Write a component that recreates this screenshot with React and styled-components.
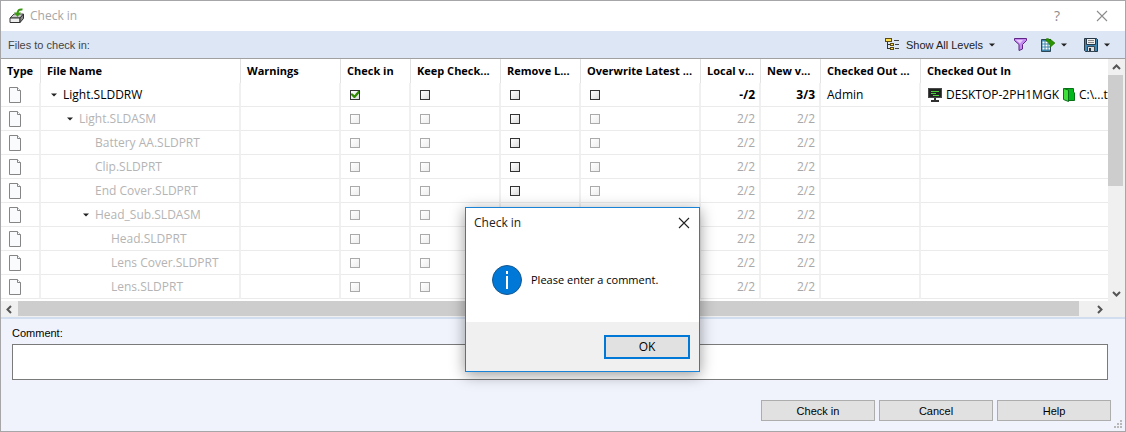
import React from "react";
import styled, { createGlobalStyle } from "styled-components";

const uiSmall = `11px/16px "Liberation Sans", Arial, sans-serif`;

const GlobalStyle = createGlobalStyle`
  *, *::before, *::after { box-sizing: border-box; }
  html, body, #root { height: 100%; }
  body { margin: 0; background: #fff; color: #000; font: 12px/16px "Open Sans", "Noto Sans", sans-serif; }
  button, textarea, input { font: inherit; color: inherit; margin: 0; padding: 0; }
  svg { display: block; flex: none; }
`;

const Window = styled.main`
  position: relative;
  display: flex;
  flex-direction: column;
  min-height: 100%;
  border: 1px solid #a6a6a8;
  background: #f0f3fc;
  overflow: hidden;
`;

const TitleBar = styled.header`
  display: flex;
  align-items: center;
  height: 30px;
  padding: 0 14px 0 8px;
  gap: 6px;
  background: #fff;
  color: #a6a6a6;
`;

const Title = styled.h1`
  flex: 1;
  margin: 0;
  font-size: 12px;
  font-weight: 400;
`;

const PlainButton = styled.button`
  display: flex;
  align-items: center;
  justify-content: center;
  border: 0;
  background: none;
`;

const CaptionButton = styled(PlainButton)`
  width: 40px;
  height: 28px;
  font-size: 14px;
  color: #8c8c8c;
  &:last-child { width: 18px; margin-left: 10px; }
`;

const Toolbar = styled.div`
  display: flex;
  align-items: center;
  height: 28px;
  padding: 0 15px 0 7px;
  border-bottom: 1px solid #a0a0a0;
  background: #dce6f4;
  font: ${uiSmall};
  font-size: 12px;
  color: #444;
`;

const ToolbarLabel = styled.span`
  flex: 1;
  font-size: 11px;
`;

const ToolButton = styled(PlainButton)`
  gap: 6px;
  height: 22px;
  margin-left: ${(p) => p.$gap}px;
  font-size: 11px;
  color: #222;
`;

const ListArea = styled.section`
  display: grid;
  grid-template-columns: minmax(0, 1fr) 17px;
  grid-template-rows: auto 16px;
  background: #fff;
`;

const TableClip = styled.div`
  overflow: hidden;
  padding-bottom: 2px;
`;

const FileTable = styled.table`
  width: 100%;
  table-layout: fixed;
  border-collapse: separate;
  border-spacing: 0;
`;

const Col = styled.col`
  width: ${(p) => (p.$w ? `${p.$w}px` : "auto")};
`;

const HeadCell = styled.th`
  height: 24px;
  padding: 0 0 0 6px;
  border-right: 1px solid #e2e2e2;
  font-weight: 700;
  font-size: 11px;
  text-align: left;
  white-space: nowrap;
  overflow: hidden;
  &:last-child { border-right: 0; }
`;

const Cell = styled.td`
  height: 24px;
  padding: 1px ${(p) => (p.$right ? 4 : 0)}px 0 ${(p) => p.$pad ?? 6}px;
  border-right: 2px solid #f0f0f0;
  border-bottom: 1px solid #ebebeb;
  color: ${(p) => (p.$dim ? "#a8a8a8" : "#000")};
  font-weight: ${(p) => (p.$bold ? 700 : 400)};
  text-align: ${(p) => (p.$right ? "right" : "left")};
  white-space: nowrap;
  overflow: hidden;
  &:last-child { border-right: 0; }
`;

const NameLine = styled.div`
  display: flex;
  align-items: center;
  padding-left: ${(p) => 10 + p.$level * 16}px;
  color: ${(p) => (p.$dim ? "#b4b4b4" : "#000")};
`;

const Expander = styled(PlainButton)`
  width: 12px;
  height: 16px;
  justify-content: flex-start;
  color: #222;
`;

const ExpanderSpace = styled.span`
  width: 12px;
`;

const Location = styled.div`
  display: flex;
  align-items: center;
  gap: 4px;
`;

const Check = styled.input.attrs({ type: "checkbox" })`
  appearance: none;
  display: block;
  width: 10px;
  height: 10px;
  border: 1px solid #333;
  background: linear-gradient(135deg, #fff, #dcdcdc);
  &:disabled { border-color: #aaa; background: linear-gradient(135deg, #fff, #eee); }
  &:checked::after {
    content: "";
    display: block;
    width: 8px;
    height: 8px;
    background: #2f8a00;
    clip-path: polygon(0 30%, 20% 30%, 42% 52%, 88% 0, 100% 0, 100% 30%, 50% 88%, 36% 88%, 0 50%);
  }
`;

const VScroll = styled.div`
  display: flex;
  flex-direction: column;
  background: #f0f0f0;
  padding-right: 2px;
`;

const HScroll = styled.div`
  grid-column: 1 / -1;
  display: flex;
  background: #f0f0f0;
  padding: 0 17px 1px 0;
`;

const ScrollButton = styled(PlainButton)`
  flex: none;
  width: 17px;
  height: 16px;
  color: #555;
`;

const VTrack = styled.div`
  flex: 1;
`;

const VThumb = styled.div`
  height: 53%;
  background: #cdcdcd;
`;

const HTrack = styled.div`
  flex: 1;
  padding-right: 12px;
`;

const HThumb = styled.div`
  height: 100%;
  background: #cdcdcd;
`;

const CommentPanel = styled.section`
  flex: 1;
  display: flex;
  flex-direction: column;
  padding: 6px 17px 0 11px;
  border-top: 2px solid #d2def0;
`;

const CommentLabel = styled.label`
  height: 19px;
  font: ${uiSmall};
`;

const CommentBox = styled.textarea`
  display: block;
  width: 100%;
  height: 36px;
  padding: 4px;
  border: 1px solid #7a7a7a;
  background: #fff;
  resize: none;
  outline: 0;
`;

const Footer = styled.footer`
  display: flex;
  justify-content: flex-end;
  gap: 4px;
  padding: 20px 14px 10px;
`;

const PushButton = styled.button`
  width: 114px;
  height: 21px;
  border: 1px solid #adadad;
  background: #e1e1e1;
  && { font: ${uiSmall}; }
`;

const Grip = styled.svg`
  position: absolute;
  right: 2px;
  bottom: 2px;
`;

const Dialog = styled.div`
  position: absolute;
  top: 206px;
  left: 464px;
  display: flex;
  flex-direction: column;
  width: 235px;
  border: 1px solid #1883d7;
  background: #fff;
  box-shadow: 0 3px 14px rgba(0, 0, 0, 0.4);
`;

const DialogTitle = styled.div`
  display: flex;
  align-items: center;
  justify-content: space-between;
  height: 30px;
  padding: 0 9px 0 8px;
  color: #222;
`;

const DialogBody = styled.div`
  display: flex;
  align-items: center;
  gap: 9px;
  height: 84px;
  padding: 0 26px;
  font-size: 11px;
  white-space: nowrap;
`;

const DialogFooter = styled.div`
  display: flex;
  justify-content: flex-end;
  padding: 13px 9px 12px;
  background: #f0f0f0;
`;

const OkButton = styled.button`
  width: 86px;
  height: 24px;
  border: 2px solid #0078d7;
  background: #e1e1e1;
`;

const DownArrow = () => (
  <svg width="6" height="4" viewBox="0 0 6 4" aria-hidden="true">
    <path d="M0 0.500H6L3 3.500Z" fill="currentColor" />
  </svg>
);

const chevrons = {
  up: "M1 6L4.500 2.500L8 6",
  down: "M1 3L4.500 6.500L8 3",
  left: "M6 1L2.500 4.500L6 8",
  right: "M3 1L6.500 4.500L3 8",
};

const Chevron = ({ to }) => (
  <svg width="9" height="9" viewBox="0 0 9 9" aria-hidden="true">
    <path d={chevrons[to]} fill="none" stroke="currentColor" strokeWidth="2" />
  </svg>
);

const CloseIcon = () => (
  <svg width="12" height="12" viewBox="0 0 12 12" aria-hidden="true">
    <path d="M1 1L11 11M11 1L1 11" stroke="currentColor" strokeWidth="1.1" />
  </svg>
);

const CheckInIcon = () => (
  <svg width="15" height="16" viewBox="0 0 15 16" aria-hidden="true">
    <path d="M1 10L5 6H14.500L11 10Z" fill="#c8c8c8" stroke="#444" />
    <path d="M1 10H11V14.500H1Z" fill="#eee" stroke="#333" />
    <path d="M11 10L14.500 6V10.500L11 14.500Z" fill="#888" stroke="#333" />
    <path d="M13.500 1.500C10 1 8.500 2.500 8.500 6" fill="none" stroke="#3a9a10" strokeWidth="2" />
    <path d="M5 4.500H12L8.500 9Z" fill="#3a9a10" />
  </svg>
);

const LevelsIcon = () => (
  <svg width="15" height="13" viewBox="0 0 15 13" shapeRendering="crispEdges" aria-hidden="true">
    <path d="M0.500 0.500H6.500V3.500H0.500Z" fill="#ffe14d" stroke="#5e4a10" />
    <path d="M2.500 4V10.500H5M2.500 6.500H5" fill="none" stroke="#333" />
    <path d="M5.500 5.500H8.500V7.500H5.500ZM5.500 9.500H8.500V11.500H5.500Z" fill="#ffe14d" stroke="#5e4a10" />
    <path d="M9 2.500H14M10 6.500H14M10 10.500H14" stroke="#444" />
  </svg>
);

const FunnelIcon = () => (
  <svg width="13" height="13" viewBox="0 0 13 13" aria-hidden="true">
    <path d="M0.500 0.500H12.500V2.500L8.500 6.500V11L5 12.500V6.500L0.500 2.500Z" fill="#c58af0" stroke="#5f2485" />
    <path d="M2 2H9L6 5.500Z" fill="#e8ccff" />
  </svg>
);

const ExportIcon = () => (
  <svg width="15" height="14" viewBox="0 0 15 14" aria-hidden="true">
    <path d="M1.500 1.500H10.500V13.500H1.500Z" fill="#3f86ad" stroke="#2d4757" />
    <path d="M2.500 4.500H10M2.500 7.500H10M2.500 10.500H10" stroke="#fff" strokeWidth="2" strokeDasharray="2 1" />
    <path d="M6 1C8 0 9.500 1 10 2.500V1L15 5L10 9.500V7C8.500 6 9 3.500 6 3Z" fill="#2b9400" stroke="#1c6200" strokeWidth="0.5" />
  </svg>
);

const SaveIcon = () => (
  <svg width="14" height="14" viewBox="0 0 14 14" aria-hidden="true">
    <path d="M0.500 0.500H12.500L13.500 1.500V13.500H1.500L0.500 12.500Z" fill="#3f86b5" stroke="#263746" />
    <path d="M2.500 0.500H11.500V6.500H2.500Z" fill="#eee" stroke="#263746" />
    <path d="M4 2.500H10M4 4.500H10" stroke="#888" />
    <path d="M3.500 8.500H10.500V13.500H3.500Z" fill="#ddd" stroke="#344653" />
    <path d="M5 10H7V13H5Z" fill="#263746" />
  </svg>
);

const FileIcon = () => (
  <svg width="12" height="16" viewBox="0 0 12 16" aria-hidden="true">
    <path d="M0.500 0.500H8.500L11.500 3.500V15.500H0.500Z" fill="#fafbfc" stroke="#858585" />
    <path d="M8.500 0.500V3.500H11.500" fill="#fff" stroke="#858585" />
  </svg>
);

const MonitorIcon = () => (
  <svg width="14" height="14" viewBox="0 0 14 14" shapeRendering="crispEdges" aria-hidden="true">
    <path d="M0 0H14V10H0Z" fill="#484848" />
    <path d="M1 1H13V9H1Z" fill="#202420" />
    <path d="M3 3.500H11M3 5.500H8M5 7.500H11" stroke="#4fce3c" />
    <path d="M6 10H8V12H11V14H3V12H6Z" fill="#303030" />
  </svg>
);

const FolderIcon = () => (
  <svg width="12" height="14" viewBox="0 0 12 14" aria-hidden="true">
    <path d="M1 0.500H10.500V4L11.500 5V12.500H5Z" fill="#00b81c" stroke="#087016" />
    <path d="M0.500 0.500L5.500 2V13.500L0.500 11.500Z" fill="#3fe03c" stroke="#087016" />
  </svg>
);

const InfoIcon = () => (
  <svg width="30" height="30" viewBox="0 0 30 30" aria-hidden="true">
    <circle cx="15" cy="15" r="14.500" fill="#0078d7" stroke="#17588f" />
    <path d="M14 6H16V9H14ZM14 11H16V24H14Z" fill="#fff" />
  </svg>
);

const columns = [
  ["Type", 40],
  ["File Name", 200],
  ["Warnings", 100],
  ["Check in", 70],
  ["Keep Check...", 90],
  ["Remove L...", 80],
  ["Overwrite Latest ...", 120],
  ["Local v...", 60],
  ["New v...", 60],
  ["Checked Out ...", 100],
  ["Checked Out In", null],
];

const files = [
  { name: "Light.SLDDRW", level: 0, open: true, active: true },
  { name: "Light.SLDASM", level: 1, open: true },
  { name: "Battery AA.SLDPRT", level: 2 },
  { name: "Clip.SLDPRT", level: 2 },
  { name: "End Cover.SLDPRT", level: 2 },
  { name: "Head_Sub.SLDASM", level: 2, open: true },
  { name: "Head.SLDPRT", level: 3 },
  { name: "Lens Cover.SLDPRT", level: 3 },
  { name: "Lens.SLDPRT", level: 3 },
];

function FileRow({ file }) {
  const dim = !file.active;
  return (
    <tr>
      <Cell $pad={8}><FileIcon /></Cell>
      <Cell $pad={0}>
        <NameLine $level={file.level} $dim={dim}>
          {file.open ? (
            <Expander aria-label={`Collapse ${file.name}`}><DownArrow /></Expander>
          ) : (
            <ExpanderSpace />
          )}
          {file.name}
        </NameLine>
      </Cell>
      <Cell />
      <Cell $pad={9}><Check aria-label={`Check in ${file.name}`} defaultChecked={file.active} disabled={dim} /></Cell>
      <Cell $pad={9}><Check aria-label={`Keep ${file.name} checked out`} disabled={dim} /></Cell>
      <Cell $pad={9}><Check aria-label={`Remove local copy of ${file.name}`} /></Cell>
      <Cell $pad={9}><Check aria-label={`Overwrite latest version of ${file.name}`} disabled={dim} /></Cell>
      <Cell $right $bold={file.active} $dim={dim}>{file.active ? "-/2" : "2/2"}</Cell>
      <Cell $right $bold={file.active} $dim={dim}>{file.active ? "3/3" : "2/2"}</Cell>
      <Cell>{file.active ? "Admin" : null}</Cell>
      <Cell $pad={7}>
        {file.active && (
          <Location>
            <MonitorIcon />
            <span>DESKTOP-2PH1MGK</span>
            <FolderIcon />
            <span>C:\...t</span>
          </Location>
        )}
      </Cell>
    </tr>
  );
}

export default function App() {
  return (
    <>
      <GlobalStyle />
      <Window>
        <TitleBar>
          <CheckInIcon />
          <Title>Check in</Title>
          <CaptionButton aria-label="Help">?</CaptionButton>
          <CaptionButton aria-label="Close"><CloseIcon /></CaptionButton>
        </TitleBar>
        <Toolbar>
          <ToolbarLabel>Files to check in:</ToolbarLabel>
          <ToolButton $gap={0}><LevelsIcon />Show All Levels<DownArrow /></ToolButton>
          <ToolButton $gap={19} aria-label="Filter"><FunnelIcon /></ToolButton>
          <ToolButton $gap={13} aria-label="Export"><ExportIcon /><DownArrow /></ToolButton>
          <ToolButton $gap={17} aria-label="Save"><SaveIcon /><DownArrow /></ToolButton>
        </Toolbar>
        <ListArea>
          <TableClip>
            <FileTable>
              <colgroup>
                {columns.map(([label, w]) => <Col key={label} $w={w} />)}
              </colgroup>
              <thead>
                <tr>{columns.map(([label]) => <HeadCell key={label} scope="col">{label}</HeadCell>)}</tr>
              </thead>
              <tbody>
                {files.map((file) => <FileRow key={file.name} file={file} />)}
              </tbody>
            </FileTable>
          </TableClip>
          <VScroll>
            <ScrollButton aria-label="Scroll up"><Chevron to="up" /></ScrollButton>
            <VTrack><VThumb /></VTrack>
            <ScrollButton aria-label="Scroll down"><Chevron to="down" /></ScrollButton>
          </VScroll>
          <HScroll>
            <ScrollButton aria-label="Scroll left"><Chevron to="left" /></ScrollButton>
            <HTrack><HThumb /></HTrack>
            <ScrollButton aria-label="Scroll right"><Chevron to="right" /></ScrollButton>
          </HScroll>
        </ListArea>
        <CommentPanel>
          <CommentLabel htmlFor="comment">Comment:</CommentLabel>
          <CommentBox id="comment" />
        </CommentPanel>
        <Footer>
          <PushButton>Check in</PushButton>
          <PushButton>Cancel</PushButton>
          <PushButton>Help</PushButton>
        </Footer>
        <Grip width="9" height="9" viewBox="0 0 9 9" aria-hidden="true">
          <path d="M6 0H8V2H6ZM3 3H5V5H3ZM6 3H8V5H6ZM0 6H2V8H0ZM3 6H5V8H3ZM6 6H8V8H6Z" fill="#b8b8b8" />
        </Grip>
        <Dialog role="dialog" aria-labelledby="message-title">
          <DialogTitle>
            <span id="message-title">Check in</span>
            <PlainButton aria-label="Close message"><CloseIcon /></PlainButton>
          </DialogTitle>
          <DialogBody><InfoIcon />Please enter a comment.</DialogBody>
          <DialogFooter><OkButton>OK</OkButton></DialogFooter>
        </Dialog>
      </Window>
    </>
  );
}
